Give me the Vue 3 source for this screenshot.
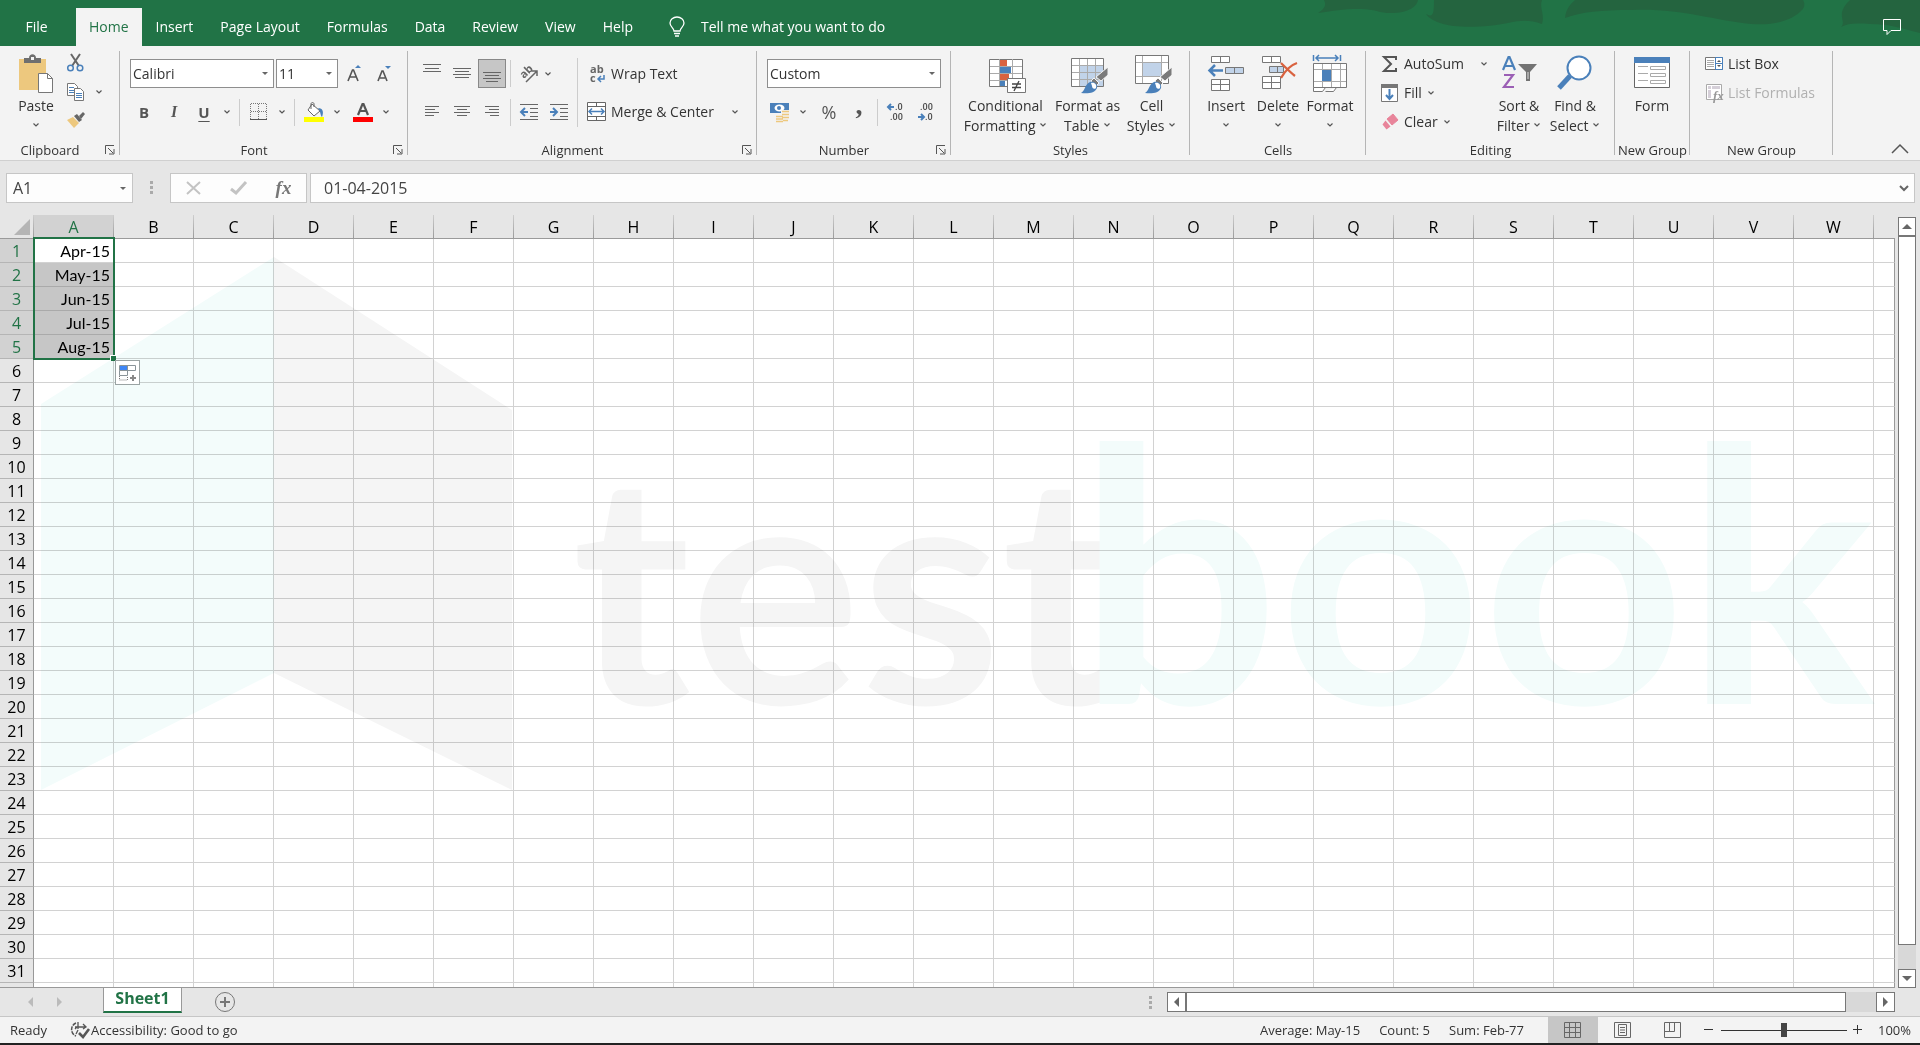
<script setup>
import { ref } from 'vue'

const tabs = ['File', 'Home', 'Insert', 'Page Layout', 'Formulas', 'Data', 'Review', 'View', 'Help']
const activeTab = ref('Home')
const columns = 'ABCDEFGHIJKLMNOPQRSTUVW'.split('')
const values = ['Apr-15', 'May-15', 'Jun-15', 'Jul-15', 'Aug-15']
const rowCount = 32
const nameBox = ref('A1')
const formula = ref('01-04-2015')
const zoom = ref(50)
</script>

<template>
  <div class="app">
    <svg class="defs" aria-hidden="true">
      <symbol id="chev" viewBox="0 0 8 6"><path d="M1.500 1.500L4 4l2.500-2.500" fill="none" stroke="#555" stroke-width="1.200" /></symbol>
      <symbol id="launch" viewBox="0 0 10 10"><path d="M.5 9V.5H9M3 3l5 5M9 4v5H4" fill="none" stroke="#555" /></symbol>
      <symbol id="brush" viewBox="0 0 28 28">
        <path d="M27 1v8l-7 6-5-4zM13 12l5 5-3 3-5-5z" fill="#7a7a7a" stroke="#f3f3f3" stroke-width="1" />
        <path d="M0 27c4-2 4-9 9-11 4-1 8 2 7 6-2 5-9 6-16 5z" fill="#4a80ba" />
        <path d="M10 17c4-1 6 2 5 5-2 2-4 0-4-2z" fill="#fff" />
      </symbol>
    </svg>

    <header class="titlebar">
      <svg class="art" viewBox="0 0 620 46" aria-hidden="true">
        <path d="M18 13C26 8 26 4 24 0h94c-1 6-8 12-24 13-14 1-20-5-36-4-16 0-24 2-40 4zM126 14c6 3 8 3 8-14h108c-3 8 3 14 0 24-12-4-20-4-34-1-20 4-50 6-68 0-8-3-12-6-14-9zM265 18c1-10 6-14 10-18h228c2 3 2 8-2 11-8 8-24 15-50 13-40-4-70-16-120-14-30 0-50 2-66 8zM541 27c4-4 0-8 1-15 2-6 5-9 8-12h70v33c-20-5-30-9-50-9-14-1-22-1-29 3z" fill="#24643f" />
      </svg>
      <nav class="tabs">
        <button v-for="t in tabs" :key="t" class="tab" :class="{ active: t === activeTab, file: t === 'File' }" @click="activeTab = t">{{ t }}</button>
        <button class="tab tell">
          <svg width="16" height="20" viewBox="0 0 16 20" fill="none" stroke="#fff" stroke-width="1.300"><path d="M5 14c0-3-4-4-4-8a7 6 0 0 1 14 0c0 4-4 5-4 8zM5 16.500h6M6 19h4" /></svg>
          Tell me what you want to do
        </button>
      </nav>
      <button class="comment" aria-label="Comments">
        <svg width="20" height="18" viewBox="0 0 20 18" fill="none" stroke="#fff"><path d="M1.500 1.500h17v11H9l-4 4v-4H1.500z" /></svg>
      </button>
    </header>

    <section class="ribbon">
      <div class="group g-clip">
        <div class="body">
          <button class="big paste">
            <svg width="36" height="40" viewBox="0 0 36 40">
              <path d="M1 5h27v31H1z" fill="#edc87e" /><path d="M6 9V4h5c0-5 7-5 7 0h5v5z" fill="#6f6f6f" /><path d="M13 3h3v3h-3z" fill="#f3f3f3" />
              <path d="M20.500 19.500h9l5 5v14h-14z" fill="#fff" stroke="#777" /><path d="M29.500 19.500v5h5" fill="none" stroke="#777" />
            </svg>
            <span>Paste</span><span><svg class="chev"><use href="#chev" /></svg></span>
          </button>
          <div class="cliptools">
            <button aria-label="Cut"><svg width="18" height="18" viewBox="0 0 18 18" fill="none"><path d="M4 0l8 12M13 0L5 12" stroke="#666" stroke-width="2" /><circle cx="3.500" cy="14" r="2.800" stroke="#4a80ba" stroke-width="1.500" /><circle cx="13" cy="14" r="2.800" stroke="#4a80ba" stroke-width="1.500" /></svg></button>
            <span class="pair"><button aria-label="Copy"><svg width="18" height="18" viewBox="0 0 18 18"><path d="M.5.5h7l3 3v9H.5z" fill="#fff" stroke="#777" /><path d="M2 4.500h5M2 7.500h5M2 9.500h5" stroke="#4a80ba" /><path d="M7.500 5.500h6l3 3v9h-9z" fill="#fff" stroke="#777" /><path d="M9 10.500h6M9 12.500h6M9 14.500h6" stroke="#4a80ba" /></svg></button>
              <button class="dd" aria-label="Copy options"><svg class="chev"><use href="#chev" /></svg></button></span>
            <button aria-label="Format Painter"><svg width="18" height="16" viewBox="0 0 18 16"><path d="M0 8l6-3 6 6-5 5z" fill="#edc87e" /><path d="M7 4l3-2 5 6-3 2z" fill="#666" /><path d="M12 4l4-4 2 2-4 5z" fill="#666" /></svg></button>
          </div>
        </div>
        <div class="label"><span>Clipboard</span><button class="launcher" aria-label="Clipboard settings"><svg><use href="#launch" /></svg></button></div>
      </div>

      <div class="group g-font">
        <div class="body rows">
          <div class="row combos">
            <label class="combo c-font"><select aria-label="Font"><option>Calibri</option></select></label>
            <label class="combo c-size"><select aria-label="Font size"><option>11</option></select></label>
            <button class="ic grow" aria-label="Grow font"><svg width="18" height="20" viewBox="0 0 18 20"><path d="M3 17L7.500 6h1L13 17M5 13h6" fill="none" stroke="#555" stroke-width="1.600" /><path d="M10 4l3-3 3 3z" fill="#4a80ba" /></svg></button>
            <button class="ic grow" aria-label="Shrink font"><svg width="18" height="20" viewBox="0 0 18 20"><path d="M3 17L7 7h1l4 10M5 14h5" fill="none" stroke="#555" stroke-width="1.600" /><path d="M10 2l3 3 3-3z" fill="#4a80ba" /></svg></button>
          </div>
          <div class="row fmt">
            <button class="ic bold">B</button><button class="ic ital">I</button><button class="ic under">U</button>
            <button class="dd" aria-label="Underline options"><svg class="chev"><use href="#chev" /></svg></button>
            <i class="sep"></i>
            <button class="ic" aria-label="Borders"><svg width="18" height="18" viewBox="0 0 18 18"><path d="M.5 1v15M8.500 1v15M16.500 1v15M1 .5h16M1 8.500h16" stroke="#777" stroke-dasharray="1 1" /><path d="M0 16.500h17" stroke="#555" /></svg></button>
            <button class="dd" aria-label="Border options"><svg class="chev"><use href="#chev" /></svg></button>
            <i class="sep"></i>
            <button class="ic" aria-label="Fill color"><svg width="20" height="20" viewBox="0 0 20 20"><path d="M8 2l8 7-6 5-6-6z" fill="#fff" stroke="#666" /><path d="M7 7V2c0-2 3-2 3 0v3" fill="none" stroke="#666" /><path d="M14 6c5 0 6 4 4 9-2-2-1-5-4-9z" fill="#4a80ba" /><path d="M0 15h20v5H0z" fill="#ff0" /></svg></button>
            <button class="dd" aria-label="Fill color options"><svg class="chev"><use href="#chev" /></svg></button>
            <button class="ic fcol" aria-label="Font color"><svg width="20" height="20" viewBox="0 0 20 20"><path d="M5 13L9.500 2h1L15 13M7 9h6" fill="none" stroke="#555" stroke-width="2.200" /><path d="M0 15h20v5H0z" fill="red" /></svg></button>
            <button class="dd" aria-label="Font color options"><svg class="chev"><use href="#chev" /></svg></button>
          </div>
        </div>
        <div class="label"><span>Font</span><button class="launcher" aria-label="Font settings"><svg><use href="#launch" /></svg></button></div>
      </div>

      <div class="group g-align">
        <div class="body">
          <div class="rows">
            <div class="row">
              <button class="ic" aria-label="Top align"><svg width="18" height="20" stroke="#666"><path d="M0 .5h18M2 4.500h14M0 7.500h18" /></svg></button>
              <button class="ic" aria-label="Middle align"><svg width="18" height="20" stroke="#666"><path d="M0 4.500h18M2 7.500h14M0 10.500h18M2 13.500h14" /></svg></button>
              <button class="ic on" aria-label="Bottom align"><svg width="18" height="20" stroke="#666"><path d="M0 8.500h18M2 11.500h14M0 14.500h18M3 17.500h12" /></svg></button>
              <i class="sep near"></i>
              <button class="ic" aria-label="Orientation"><svg width="20" height="20" viewBox="0 0 20 20"><text x="5" y="15" transform="rotate(-45 5 15)" class="ab">ab</text><path d="M7 18L18 7M13 7h5v5" fill="none" stroke="#666" stroke-width="1.500" /></svg></button>
              <button class="dd ori" aria-label="Orientation options"><svg class="chev"><use href="#chev" /></svg></button>
            </div>
            <div class="row">
              <button class="ic" aria-label="Align left"><svg width="14" height="12" stroke="#666"><path d="M0 .5h14M0 3.500h10M0 6.500h14M0 9.500h9" /></svg></button>
              <button class="ic" aria-label="Center"><svg width="16" height="12" stroke="#666"><path d="M0 .5h16M3 3.500h10M0 6.500h16M3 9.500h10" /></svg></button>
              <button class="ic" aria-label="Align right"><svg width="14" height="12" stroke="#666"><path d="M0 .5h14M4 3.500h10M0 6.500h14M5 9.500h9" /></svg></button>
              <i class="sep near"></i>
              <button class="ic" aria-label="Decrease indent"><svg width="18" height="16" fill="none" stroke="#666"><path d="M0 .5h18M10 4.500h8M10 8.500h8M10 12.500h8M0 15.500h18" /><path d="M8 8H2M5 4L1 8l4 4" stroke="#4a80ba" stroke-width="2" /></svg></button>
              <button class="ic" aria-label="Increase indent"><svg width="18" height="16" fill="none" stroke="#666"><path d="M0 .5h18M10 4.500h8M10 8.500h8M10 12.500h8M0 15.500h18" /><path d="M0 8h6M3 4l4 4-4 4" stroke="#4a80ba" stroke-width="2" /></svg></button>
            </div>
          </div>
          <i class="sep tall"></i>
          <div class="rows wide">
            <div class="row">
              <button class="cmd"><svg width="20" height="20" viewBox="0 0 20 20"><text x="3" y="9" class="ab">ab</text><text x="3" y="18" class="ab">c</text><path d="M17 11v4h-6M14 12l-3 3 3 3" fill="none" stroke="#4a80ba" stroke-width="1.500" /></svg>Wrap Text</button>
            </div>
            <div class="row">
              <button class="cmd"><svg width="20" height="20" viewBox="0 0 20 20" fill="none"><path d="M.5.500h18v18H.5zM.5 4.500h18M.5 14.500h18M9.500.500v4M9.500 14.500v4" fill="#fff" stroke="#666" /><path d="M2 9.500h15M5 6.500l-3 3 3 3M14 6.500l3 3-3 3" stroke="#4a80ba" stroke-width="1.500" /></svg>Merge &amp; Center</button>
              <button class="dd far" aria-label="Merge options"><svg class="chev"><use href="#chev" /></svg></button>
            </div>
          </div>
        </div>
        <div class="label"><span>Alignment</span><button class="launcher" aria-label="Alignment settings"><svg><use href="#launch" /></svg></button></div>
      </div>

      <div class="group g-num">
        <div class="body rows">
          <div class="row combos"><label class="combo c-num"><select aria-label="Number format"><option>Custom</option></select></label></div>
          <div class="row">
            <button class="ic" aria-label="Accounting format"><svg width="20" height="20" viewBox="0 0 20 20"><path d="M0 1h19v10H0z" fill="#4a80ba" /><ellipse cx="9.500" cy="6" rx="5" ry="3.500" fill="#fff" /><circle cx="9" cy="6" r="2" fill="#4a80ba" /><path d="M11 8h8v12H6v-7h5z" fill="#f3f3f3" /><path d="M12 9.500h7M12 12.500h7M12 15.500h7M6 14.500h7M6 17h7M6 19.500h7M13 18.500h5" stroke="#edc87e" stroke-width="1.600" /></svg></button>
            <button class="dd cur" aria-label="Currency options"><svg class="chev"><use href="#chev" /></svg></button>
            <button class="ic pct">%</button><button class="ic comma">,</button>
            <i class="sep near"></i>
            <button class="ic" aria-label="Increase decimal"><svg width="18" height="20" viewBox="0 0 18 20"><text x="8" y="8" class="dec">.0</text><text x="3" y="18" class="dec">.00</text><path d="M7 5H2M4 2L1 5l3 3" fill="none" stroke="#4a80ba" stroke-width="2" /></svg></button>
            <button class="ic" aria-label="Decrease decimal"><svg width="18" height="20" viewBox="0 0 18 20"><text x="3" y="8" class="dec">.00</text><text x="8" y="18" class="dec">.0</text><path d="M1 15h5M4 12l3 3-3 3" fill="none" stroke="#4a80ba" stroke-width="2" /></svg></button>
          </div>
        </div>
        <div class="label"><span>Number</span><button class="launcher" aria-label="Number settings"><svg><use href="#launch" /></svg></button></div>
      </div>

      <div class="group g-styles">
        <div class="body">
          <button class="big">
            <svg width="38" height="40" viewBox="0 0 38 40"><path d="M.5 5.500h33v27H.5z" fill="#fff" stroke="#777" /><path d="M10.500 5v27M23.500 5v27M1 12.500h32M1 19.500h32M1 26.500h32" stroke="#aaa" /><path d="M11 6h7v6h-7zM11 20h9v6h-9z" fill="#d9623f" /><path d="M11 13h11v6H11zM11 27h5v5h-5z" fill="#4a80ba" /><path d="M18.500 24.500h18v14h-18z" fill="#fff" stroke="#777" /><path d="M23 30h9M23 33.500h9M30 27l-5 10" stroke="#444" stroke-width="1.300" /></svg>
            <span>Conditional</span><span>Formatting <svg class="chev"><use href="#chev" /></svg></span>
          </button>
          <button class="big">
            <svg width="38" height="40" viewBox="0 0 38 40"><path d="M.5 4.500h32v28H.5z" fill="#fff" stroke="#777" /><path d="M9 12h23v20H9z" fill="#c1d3e9" /><path d="M8.500 5v27M16.500 5v27M24.500 5v27M1 11.500h31M1 18.500h31M1 25.500h31" stroke="#aaa" /><use href="#brush" x="10" y="12" width="28" height="28" /></svg>
            <span>Format as</span><span>Table <svg class="chev"><use href="#chev" /></svg></span>
          </button>
          <button class="big">
            <svg width="38" height="40" viewBox="0 0 38 40"><path d="M.5 1.500h33v28H.5z" fill="#fff" stroke="#777" /><path d="M7.500 2v27M26.500 2v27M1 8.500h32M1 22.500h32" stroke="#aaa" /><path d="M8 9h18v13H8z" fill="#c1d3e9" /><use href="#brush" x="10" y="12" width="28" height="28" /></svg>
            <span>Cell</span><span>Styles <svg class="chev"><use href="#chev" /></svg></span>
          </button>
        </div>
        <div class="label"><span>Styles</span></div>
      </div>

      <div class="group g-cells">
        <div class="body">
          <button class="big">
            <svg width="38" height="40" viewBox="0 0 38 40"><path d="M4.500 2.500h18v6h-18zM13.500 2.500v6M4.500 25.500h18v11h-18zM13.500 25.500v11M4.500 30.500h18" fill="#fff" stroke="#777" /><path d="M18.500 13.500h18v6h-18zM27.500 13.500v6" fill="#c1d3e9" stroke="#777" /><path d="M16 16.500H3M8 11l-5.500 5.500L8 22" fill="none" stroke="#4a80ba" stroke-width="2.500" /></svg>
            <span>Insert</span><span><svg class="chev"><use href="#chev" /></svg></span>
          </button>
          <button class="big">
            <svg width="38" height="40" viewBox="0 0 38 40"><path d="M3.500 2.500h18v6h-18zM12.500 2.500v6M3.500 22.500h18v12h-18zM12.500 22.500v12M3.500 28.500h18" fill="#fff" stroke="#777" /><path d="M10.500 12.500h14v6h-14zM18.500 12.500v6" fill="#c1d3e9" stroke="#777" /><path d="M22 9c4 4 9 9 14 13M38 9c-6 2-12 8-16 15" fill="none" stroke="#d9623f" stroke-width="2.300" /></svg>
            <span>Delete</span><span><svg class="chev"><use href="#chev" /></svg></span>
          </button>
          <button class="big">
            <svg width="38" height="40" viewBox="0 0 38 40"><path d="M2.500 9.500h33v24h-33zM2.500 33.500v4h9l3-4M14.500 37.500h8l3-4" fill="#fff" stroke="#777" /><path d="M11.500 10v23M20.500 10v23M29.500 10v23M3 15.500h32M3 27.500h32" stroke="#aaa" /><path d="M11 16h9v11h-9z" fill="#4a80ba" /><path d="M2.500 1v6M29.500 1v6M5 4h22M8 1L5 4l3 3M24 1l3 3-3 3" fill="none" stroke="#4a80ba" stroke-width="1.500" /></svg>
            <span>Format</span><span><svg class="chev"><use href="#chev" /></svg></span>
          </button>
        </div>
        <div class="label"><span>Cells</span></div>
      </div>

      <div class="group g-edit">
        <div class="body">
          <div class="stack">
            <div class="line"><button class="cmd"><svg width="18" height="18" viewBox="0 0 18 18"><path d="M15 5V2H3l7 7-7 7h12v-3" fill="none" stroke="#555" stroke-width="2" /></svg>AutoSum</button><button class="dd end" aria-label="AutoSum options"><svg class="chev"><use href="#chev" /></svg></button></div>
            <div class="line"><button class="cmd"><svg width="18" height="18" viewBox="0 0 18 18"><path d="M.5.500h16v17H.5z" fill="#fff" stroke="#777" /><path d="M0 0h17v4H0z" fill="#777" /><path d="M8.500 5v9M5 11l3.500 4 3.500-4" fill="none" stroke="#4a80ba" stroke-width="2" /></svg>Fill <svg class="chev"><use href="#chev" /></svg></button></div>
            <div class="line"><button class="cmd"><svg width="18" height="18" viewBox="0 0 18 18"><path d="M6 6l6-5 5 6-6 5z" fill="#e8849a" stroke="#e8849a" /><path d="M4.500 7.500l5 6-4 3-4-5z" fill="#e8849a" /></svg>Clear <svg class="chev"><use href="#chev" /></svg></button></div>
          </div>
          <button class="big b-sort">
            <svg width="38" height="40" viewBox="0 0 38 40" fill="none"><path d="M3 16L8.500 3h1L15 16M5 12h8" stroke="#4a80ba" stroke-width="2.200" /><path d="M4 21h9L4 33h10" stroke="#9b5fb5" stroke-width="2.200" /><path d="M18 10h19l-7 8v9h-4v-9z" fill="#737373" /><path d="M28 18v7" stroke="#ddd" /></svg>
            <span>Sort &amp;</span><span>Filter <svg class="chev"><use href="#chev" /></svg></span>
          </button>
          <button class="big b-find">
            <svg width="38" height="40" viewBox="0 0 38 40"><path d="M14 22L3 34" stroke="#4a80ba" stroke-width="5" /><circle cx="23" cy="14" r="11.500" fill="#fff" stroke="#4a80ba" stroke-width="2" /></svg>
            <span>Find &amp;</span><span>Select <svg class="chev"><use href="#chev" /></svg></span>
          </button>
        </div>
        <div class="label"><span>Editing</span></div>
      </div>

      <div class="group g-form">
        <div class="body">
          <button class="big">
            <svg width="38" height="40" viewBox="0 0 38 40"><path d="M1.500 3.500h35v30h-35z" fill="#fff" stroke="#666" /><path d="M1 3h36v6H1z" fill="#4a80ba" /><path d="M5 12.500h10M5 19.500h10M5 26.500h10M17.500 12.500h15v3h-15zM17.500 19.500h15v3h-15zM17.500 26.500h15v3h-15z" fill="none" stroke="#aaa" /></svg>
            <span>Form</span>
          </button>
        </div>
        <div class="label"><span>New Group</span></div>
      </div>

      <div class="group g-list">
        <div class="body">
          <div class="stack">
            <div class="line"><button class="cmd"><svg width="18" height="18" viewBox="0 0 18 18"><path d="M.5 2.500h17v12H.5z" fill="#fff" stroke="#777" /><path d="M2 5.500h7M2 7.500h7M2 9.500h7M2 11.500h7" stroke="#aaa" /><path d="M10.500 2.500h7v12h-7zM10.500 8.500h7" fill="none" stroke="#4a80ba" /><path d="M12 7l2-2 2 2zM12 10l2 2 2-2z" fill="#555" /></svg>List Box</button></div>
            <div class="line"><button class="cmd" disabled><svg width="18" height="18" viewBox="0 0 18 18"><path d="M1.500.500h15v15h-15z" fill="#fff" stroke="#aaa" /><path d="M3 2h3v3H3zM7 2h8v3H7zM3 6h3v8H3z" fill="#d5cfd8" /><text x="8" y="16" class="fxs">fx</text></svg>List Formulas</button></div>
          </div>
        </div>
        <div class="label"><span>New Group</span></div>
      </div>
      <button class="collapse" aria-label="Collapse ribbon"><svg width="18" height="10" fill="none" stroke="#555" stroke-width="1.500"><path d="M1 9l8-8 8 8" /></svg></button>
    </section>

    <section class="fbar">
      <label class="namebox"><input v-model="nameBox" aria-label="Name box" /></label>
      <span class="dots"></span>
      <div class="fx">
        <button aria-label="Cancel"><svg width="16" height="14" fill="none" stroke="#c3c3c3" stroke-width="2"><path d="M1 1l13 12M14 1L1 13" /></svg></button>
        <button aria-label="Enter"><svg width="18" height="14" fill="none" stroke="#c3c3c3" stroke-width="3"><path d="M1 8l5 4L16 1" /></svg></button>
        <button class="fxb">fx</button>
      </div>
      <label class="formula"><input v-model="formula" aria-label="Formula bar" /><svg width="10" height="8" fill="none" stroke="#666" stroke-width="2"><path d="M1 2l4 4 4-4" /></svg></label>
    </section>

    <main class="work">
      <div class="sheet">
        <table class="grid">
          <colgroup><col class="c-row" /><col v-for="c in columns" :key="c" class="c-col" /><col /></colgroup>
          <thead>
            <tr><th class="corner"><i></i></th><th v-for="c in columns" :key="c" :class="{ sel: c === 'A' }">{{ c }}</th><th class="last"></th></tr>
          </thead>
          <tbody>
            <tr v-for="r in rowCount" :key="r">
              <th :class="{ sel: r <= values.length }">{{ r < rowCount ? r : '' }}</th>
              <td v-for="(c, i) in columns" :key="c" :class="{ picked: i === 0 && r > 1 && r <= values.length }">{{ i === 0 ? values[r - 1] : '' }}</td>
              <td class="last"></td>
            </tr>
          </tbody>
        </table>
        <div class="selection"><i></i></div>
        <button class="autofill" aria-label="Auto fill options"><svg width="18" height="18" viewBox="0 0 18 18" fill="none"><path d="M1 2h7v4H1z" fill="#3f86f5" /><path d="M.5 1.500h16v5H.5zM8.500 1.500v5M.5 6.500v5h8v-5" stroke="#8a9499" /><path d="M.5 12v4h8v-4" stroke="#777" stroke-dasharray="1 1" /><path d="M14 11v6M11 14h6" stroke="#888" stroke-width="2" /></svg></button>
        <svg class="mark" width="1920" height="640" viewBox="0 0 1920 640">
          <path d="M274 42v416L41 575V189z" fill="#f3fcfb" /><path d="M274 42l238 153v380L274 458z" fill="#f5f5f5" />
          <text x="572" y="489" fill="#f5f5f5" class="mark-a">test</text>
          <text x="1078" y="489" fill="#f3fcfb" class="mark-b">book</text>
        </svg>
      </div>
      <div class="vscroll">
        <button aria-label="Scroll up"><svg width="10" height="6"><path d="M0 5l5-5 5 5z" fill="#666" /></svg></button>
        <span class="vthumb"></span><span class="vtrack"></span>
        <button aria-label="Scroll down"><svg width="10" height="6"><path d="M0 0l5 5 5-5z" fill="#666" /></svg></button>
      </div>
    </main>

    <section class="sheets">
      <button class="nav" aria-label="Previous sheet"><svg width="6" height="10"><path d="M5 0v10L0 5z" fill="#bbb" /></svg></button>
      <button class="nav" aria-label="Next sheet"><svg width="6" height="10"><path d="M0 0v10l5-5z" fill="#bbb" /></svg></button>
      <button class="stab">Sheet1</button>
      <button class="add" aria-label="New sheet"><svg width="22" height="22" viewBox="0 0 22 22" fill="none" stroke="#777"><circle cx="11" cy="11" r="9.500" /><path d="M6 11h10M11 6v10" stroke-width="2" /></svg></button>
      <span class="dots small"></span>
      <div class="hscroll">
        <button aria-label="Scroll left"><svg width="6" height="10"><path d="M5 0v10L0 5z" fill="#666" /></svg></button>
        <span class="hthumb"></span><span class="htrack"></span>
        <button aria-label="Scroll right"><svg width="6" height="10"><path d="M0 0v10l5-5z" fill="#666" /></svg></button>
      </div>
    </section>

    <footer class="status">
      <span class="ready">Ready</span>
      <button class="acc"><svg width="20" height="18" viewBox="0 0 20 18" fill="none" stroke="#555"><path d="M6 2a7 7 0 0 0 0 13" stroke-width="1.500" stroke-dasharray="4 1" /><path d="M8 1v7M5 6h11M13 3l3 3-3 2M5 8l2-2M8 9l-2 4" stroke-width="1.300" /><path d="M9 12l4 4 6-8" stroke-width="2.600" /></svg>Accessibility: Good to go</button>
      <span class="stats"><span>Average: May-15</span><span>Count: 5</span><span>Sum: Feb-77</span></span>
      <button class="view on" aria-label="Normal view"><svg width="18" height="16" fill="none" stroke="#666"><path d="M.5.500h16v15H.5zM5.500.5v15M11.500.5v15M.5 5.500h16M.5 10.500h16" /></svg></button>
      <button class="view" aria-label="Page layout view"><svg width="18" height="16" fill="none" stroke="#666"><path d="M.5.500h16v15H.5zM4.500 2.500h8v11h-8zM6 5.500h5M6 8h5M6 10.500h5" /></svg></button>
      <button class="view" aria-label="Page break view"><svg width="18" height="16" fill="none" stroke="#666"><path d="M.5.500h16v15H.5zM.5 9.500h10v-9M5.500.5v9" /></svg></button>
      <button class="zb" aria-label="Zoom out"><svg width="10" height="10" stroke="#333"><path d="M0 4.500h9" /></svg></button>
      <input v-model="zoom" class="slider" type="range" min="0" max="100" aria-label="Zoom" />
      <button class="zb" aria-label="Zoom in"><svg width="10" height="10" stroke="#333"><path d="M0 4.500h9M4.500 0v9" /></svg></button>
      <span class="pc">100%</span>
    </footer>
  </div>
</template>

<style>
body { margin: 0; background: #e6e6e6; }
</style>

<style scoped>
* { box-sizing: border-box; }
.app { display: flex; flex-direction: column; height: 100vh; overflow: hidden; font: 14px/20px "Open Sans", "Noto Sans", sans-serif; color: #333; background: #e6e6e6; border-bottom: 2px solid #222; }
button { margin: 0; padding: 0; border: 0; background: none; font: inherit; color: inherit; display: flex; align-items: center; justify-content: center; white-space: nowrap; }
input, select { font: inherit; color: inherit; }
svg { display: block; flex: none; overflow: visible; }
.defs { position: absolute; width: 0; height: 0; }
.chev { width: 8px; height: 6px; display: inline-block; vertical-align: 3px; }

.titlebar { position: relative; flex: none; height: 46px; display: flex; align-items: flex-end; justify-content: space-between; background: #217346; color: #fff; }
.art { position: absolute; right: 0; top: 0; width: 620px; height: 46px; overflow: hidden; }
.tabs { position: relative; display: flex; gap: 1px; }
.tab { height: 38px; padding: 0 13px 1px; }
.tab.file { width: 75px; padding-right: 15px; }
.tab.active { background: #f3f3f3; color: #217346; }
.tell { gap: 16px; margin-left: 9px; }
.comment { position: relative; width: 40px; height: 38px; padding-bottom: 1px; margin-right: 8px; }

.ribbon { flex: none; display: flex; background: #f3f3f3; border-bottom: 1px solid #d0d0d0; height: 115px; }
.group { display: flex; flex-direction: column; flex: none; position: relative; }
.group::after { content: ""; position: absolute; right: 0; top: 5px; bottom: 5px; width: 1px; background: #b5b5b5; }
.g-clip { width: 120px; } .g-font { width: 288px; } .g-align { width: 349px; } .g-num { width: 194px; } .g-styles { width: 239px; }
.g-cells { width: 176px; } .g-edit { width: 249px; } .g-form { width: 75px; } .g-list { width: 143px; }
.body { flex: 1; min-height: 0; display: flex; padding: 0 0 0 8px; }
.rows { display: flex; flex-direction: column; gap: 9px; padding-top: 13px; }
.row { display: flex; flex: none; align-items: center; height: 30px; }
.row:first-child { height: 29px; }
.combos { gap: 2px; padding-left: 2px; }
.fmt { padding-left: 1px; }
.label { flex: none; height: 20px; display: flex; align-items: center; font-size: 13px; }
.label span { flex: 1; text-align: center; white-space: nowrap; }
.launcher { width: 20px; height: 20px; }
.launcher svg { width: 10px; height: 10px; }
.ic { flex: none; width: 30px; height: 29px; }
.grow { width: 28px; }
.ic.on { width: 28px; margin: 0 1px; background: #c6c6c6; border: 1px solid #888; }
.dd { flex: none; width: 16px; height: 29px; }
.ori { margin-left: -4px; }
.cur { margin-right: 3px; }
.fcol { margin-left: 3px; }
.sep { flex: none; width: 1px; height: 27px; background: #ccc; margin: 0 4px; }
.sep.near { margin: 0 3px; }
.sep.tall { height: 69px; margin: 12px 5px 0 3px; }
.g-align .body { padding-left: 9px; }
.combo { position: relative; display: block; flex: none; height: 29px; }
.combo::after, .namebox::after { content: ""; position: absolute; right: 6px; top: 13px; border: 3px solid transparent; border-top-color: #666; border-bottom: 0; pointer-events: none; }
.combo select { appearance: none; width: 100%; height: 100%; border: 1px solid #8e8e8e; border-radius: 0; background: #fff; padding: 0 2px; color: #333; }
.c-font { width: 144px; } .c-size { width: 62px; } .c-num { width: 174px; }
.bold, .under { font-weight: 700; font-size: 15px; color: #555; }
.under { text-decoration: underline; text-underline-offset: 3px; }
.ital { font: italic 700 16px "Liberation Serif", serif; color: #555; }
.pct { font-size: 18px; color: #555; }
.comma { font: 700 28px/10px "Liberation Serif", serif; color: #555; padding-bottom: 14px; }
.ab { font: 700 11px "Open Sans", sans-serif; fill: #666; }
.dec { font: 600 9px "Roboto", sans-serif; fill: #555; }
.fxs { font: italic 700 13px "Liberation Serif", serif; fill: #999; }
.cmd { gap: 5px; }
.wide .cmd { margin-left: 4px; gap: 4px; }
.far { margin-left: 13px; }
.big { flex: none; flex-direction: column; justify-content: flex-start; padding-top: 8px; }
.big > svg { margin-bottom: 2px; }
.big span { height: 20px; }
.paste { width: 56px; }
.cliptools { display: flex; flex-direction: column; align-items: flex-start; gap: 11px; padding: 8px 0 0 3px; }
.pair { display: flex; height: 18px; align-items: center; }
.pair .dd { width: 28px; }
.g-styles .big > svg { margin-left: 5px; }
.g-styles .big:nth-child(1) { width: 93px; } .g-styles .big:nth-child(2) { width: 71px; } .g-styles .big:nth-child(3) { width: 57px; }
.g-cells .body { padding-left: 10px; }
.g-cells .big { width: 52px; }
.stack { padding-top: 3px; }
.line { display: flex; align-items: center; height: 29px; }
.g-edit .body { padding-left: 15px; }
.g-edit .stack { width: 111px; }
.end { margin-left: auto; }
.b-sort { width: 54px; } .b-find { width: 58px; }
.g-form .big { width: 58px; }
.g-list .body { padding-left: 15px; }
.cmd:disabled { color: #b0b0b0; }
.collapse { margin: auto 10px 5px auto; width: 20px; height: 12px; }

.fbar { flex: none; display: flex; height: 54px; padding: 12px 5px 12px 6px; font-size: 16px; color: #444; }
.namebox { position: relative; width: 127px; background: #fdfdfd; border: 1px solid #c6c6c6; display: flex; }
.namebox input { width: 100%; border: 0; background: none; padding: 0 6px; outline: 0; }
.dots { width: 3px; height: 13px; margin: 8px 17px 0 17px; background: repeating-linear-gradient(#aaa 0 3px, transparent 3px 5px); }
.fx { width: 137px; background: #fdfdfd; border: 1px solid #c6c6c6; display: flex; }
.fx button { flex: 1; }
.fxb { font: italic 700 19px "Liberation Serif", serif; color: #777; }
.formula { flex: 1; margin-left: 3px; background: #fdfdfd; border: 1px solid #c6c6c6; display: flex; align-items: center; padding-right: 5px; }
.formula input { flex: 1; border: 0; background: none; padding: 0 13px; outline: 0; }

.work { flex: 1; min-height: 0; display: flex; }
.sheet { flex: 1; min-width: 0; position: relative; overflow: hidden; border-bottom: 1px solid #999; }
.grid { width: 100%; table-layout: fixed; border-collapse: separate; border-spacing: 0; color: #000; }
.c-row { width: 34px; } .c-col { width: 80px; }
.grid th, .grid td { height: 24px; padding: 0; line-height: 20px; white-space: nowrap; overflow: hidden; }
.grid td { background: #fff; border-right: 1px solid #d2d2d2; border-bottom: 1px solid #d2d2d2; text-align: right; padding-right: 3px; font-family: Lato, sans-serif; font-size: 16px; }
.grid td.picked { background: #c6c6c6; border-bottom-color: #aaa; }
.grid th { font-weight: 400; font-size: 16px; background: #e6e6e6; }
.grid thead th { border-bottom: 1px solid #999; border-right: 1px solid; border-image: linear-gradient(#d0d0d0, #999) 1; }
.grid tbody th { border-right: 1px solid #999; border-bottom: 1px solid #b5b5b5; }
.grid th.sel { background: #d2d2d2; color: #217346; }
.grid thead th.last { border-right: 0; }
.grid td.last { border-right-color: #999; }
.corner i { display: block; width: 0; height: 0; margin-left: 14px; border: 8px solid transparent; border-right-color: #b5b5b5; border-bottom-color: #b5b5b5; }
.selection { position: absolute; left: 33px; top: 22px; width: 82px; height: 123px; border: 2px solid #217346; }
.selection i { position: absolute; right: -3px; bottom: -3px; width: 6px; height: 6px; background: #217346; border: 1px solid #fff; border-right: 0; border-bottom: 0; }
.autofill { position: absolute; left: 115px; top: 145px; width: 25px; height: 25px; background: #fff; border: 1px solid #9aa3a3; z-index: 2; }
.mark { position: absolute; left: 0; top: 0; pointer-events: none; mix-blend-mode: multiply; }
.mark text { font-family: Lato, sans-serif; font-weight: 700; }
.mark-a { font-size: 320px; }
.mark-b { font-size: 354px; }
.vscroll { flex: none; width: 25px; display: flex; flex-direction: column; padding: 2px 4px 0 3px; }
.vscroll button, .hscroll button { flex: none; width: 18px; height: 19px; background: #fff; border: 1px solid #777; }
.vthumb { flex: 1; background: #fff; border: 1px solid #777; }
.vtrack { height: 24px; background: #d8d8d8; }

.sheets { flex: none; height: 29px; display: flex; align-items: flex-start; border-bottom: 1px solid #c6c6c6; }
.nav { width: 29px; height: 28px; }
.nav:first-child { margin-left: 16px; }
.stab { width: 79px; height: 25px; margin-left: 29px; padding-bottom: 4px; background: #fff; border: 1px solid #999; border-width: 0 1px 2px; border-bottom-color: #217346; color: #217346; font-weight: 700; font-size: 16px; }
.add { margin: 3px auto 0 32px; }
.dots.small { height: 13px; margin: 8px 15px 0; }
.hscroll { width: 728px; display: flex; margin: 4px 25px 0 0; background: #d8d8d8; height: 20px; }
.hscroll button { width: 19px; height: 20px; }
.hthumb { flex: 1; background: #fff; border: 1px solid #777; }
.htrack { width: 30px; }

.status { flex: none; height: 26px; display: flex; align-items: center; background: #f3f3f3; font-size: 13px; }
.ready { margin-left: 10px; width: 60px; }
.acc { gap: 1px; }
.stats { margin-left: auto; display: flex; gap: 19px; margin-right: 24px; }
.view { width: 50px; height: 100%; }
.view.on { background: #c6c6c6; }
.zb { width: 10px; height: 20px; margin-left: 6px; }
.slider { appearance: none; width: 126px; height: 14px; margin: 0 0 0 7px; background: linear-gradient(#333, #333) center / 100% 1px no-repeat; }
.slider::-webkit-slider-thumb { appearance: none; width: 6px; height: 14px; background: #444; }
.pc { margin: 0 9px 0 15px; }
</style>
